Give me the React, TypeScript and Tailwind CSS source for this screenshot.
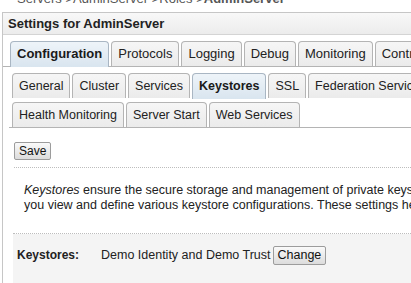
import React from "react";

const topTabs = ["Configuration", "Protocols", "Logging", "Debug", "Monitoring", "Control"];
const subTabsA = ["General", "Cluster", "Services", "Keystores", "SSL", "Federation Services"];
const subTabsB = ["Health Monitoring", "Server Start", "Web Services"];

function Tab({ label, active }: { label: string; active?: boolean }) {
	return (
		<div
			className={
				active
					? "relative -mb-px flex h-[26px] shrink-0 items-center rounded-t-[4px] border border-b-0 border-[#a9b6c3] bg-gradient-to-b from-[#eef4f9] to-[#d9e5ef] px-[6px] pb-px font-bold text-[#1a1a1a]"
					: "flex h-[25px] shrink-0 items-center rounded-t-[4px] border border-b-0 border-[#b4b4b4] bg-gradient-to-b from-[#f6f6f6] to-[#ebebeb] px-[6px] text-[#222]"
			}
		>
			{label}
		</div>
	);
}

export default function App() {
	return (
		<div className="h-[283px] w-[411px] overflow-hidden bg-white text-[12px] text-[#222] [font-family:'Liberation_Sans',Arial,sans-serif]">
			<div className="h-[12px] overflow-hidden">
				<p className="-mt-[11px] pl-[17px] text-[13px] text-[#555]">
					Servers &gt;AdminServer &gt;Roles &gt;<b>AdminServer</b>
				</p>
			</div>
			<div className="ml-[2px] w-[460px] border border-[#c6c6c6]">
				<div className="flex h-[22px] items-center border-b border-[#d4d4d4] bg-gradient-to-b from-[#f8f8f8] to-[#ececec] pl-[5px] text-[13px] font-bold text-[#222]">
					Settings for AdminServer
				</div>
				<div className="flex items-end gap-[2px] border-b border-[#b4b4b4] pl-[7px] pt-[6px] text-[13px]">
					{topTabs.map((t) => (
						<Tab key={t} label={t} active={t === "Configuration"} />
					))}
				</div>
				<div className="ml-[6px] pb-[60px] text-[12.5px]">
					<div className="flex items-end gap-[2px] pl-[3px] pt-[6px]">
						{subTabsA.map((t) => (
							<Tab key={t} label={t} active={t === "Keystores"} />
						))}
					</div>
					<div className="flex items-end gap-[2px] pl-[3px] pt-[4px]">
						{subTabsB.map((t) => (
							<Tab key={t} label={t} />
						))}
					</div>
					<div className="border-t border-[#b4b4b4]" />
					<div className="pl-[5px] pt-[14px]">
						<button className="h-[18px] rounded-[2px] border border-[#9c9c9c] bg-gradient-to-b from-[#fafafa] to-[#dcdcdc] px-[4px] text-[12px] leading-none text-[#111]">
							Save
						</button>
					</div>
					<div className="ml-[5px] mt-[6px] border-t border-dotted border-[#bdbdbd]" />
					<p className="pl-[15px] pt-[15px] text-[12.5px] leading-[15px] whitespace-nowrap">
						<i>Keystores</i> ensure the secure storage and management of private keys and trusted certificate authorities (CAs). This page lets
						<br />
						you view and define various keystore configurations. These settings help you to manage the security of message transmissions.
					</p>
					<div className="ml-[4px] mt-[20px] border-t border-dotted border-[#bdbdbd]" />
					<div className="ml-[4px] flex h-[60px] items-start bg-[#f4f4f4] pl-[4px] pt-[12px]">
						<span className="w-[84px] text-[12px] font-bold leading-[19px]">Keystores:</span>
						<span className="text-[12.5px] leading-[19px]">Demo Identity and Demo Trust</span>
						<button className="ml-[2px] h-[19px] rounded-[2px] border border-[#9c9c9c] bg-gradient-to-b from-[#fafafa] to-[#dcdcdc] px-[4px] text-[12.5px] leading-none text-[#111]">
							Change
						</button>
					</div>
				</div>
			</div>
		</div>
	);
}
